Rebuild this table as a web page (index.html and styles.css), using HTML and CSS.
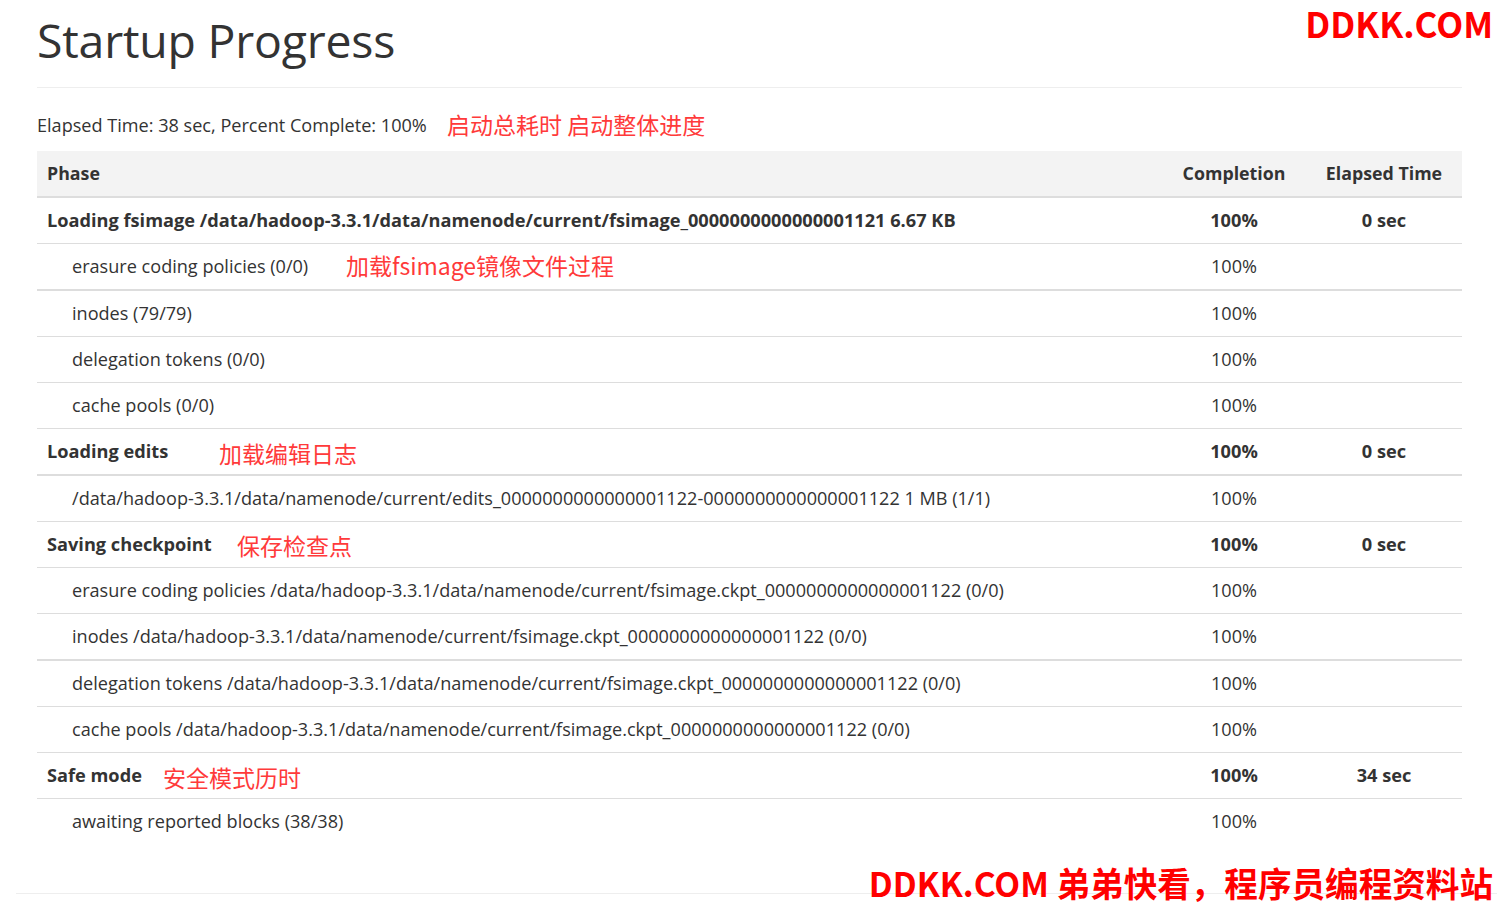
FILE: index.html
```html
<!DOCTYPE html>
<html lang="en">
<head>
    <meta charset="UTF-8">
    <title>Startup Progress</title>
    <link rel="stylesheet" href="styles.css">
</head>
<body>
    <div class="container">
        <div class="page-header">
            <h1>Startup Progress</h1>
        </div>

        <p class="summary">Elapsed Time: 38 sec, Percent Complete: 100%</p>

        <table class="table">
            <thead>
                <tr>
                    <th class="col-phase">Phase</th>
                    <th class="col-completion">Completion</th>
                    <th class="col-elapsed">Elapsed Time</th>
                </tr>
            </thead>
            <tbody>
                <tr class="phase">
                    <td>Loading fsimage /data/hadoop-3.3.1/data/namenode/current/fsimage_0000000000000001121 6.67 KB</td>
                    <td class="num">100%</td>
                    <td class="num">0 sec</td>
                </tr>
                <tr class="step heavy">
                    <td>erasure coding policies (0/0)</td>
                    <td class="num">100%</td>
                    <td></td>
                </tr>
                <tr class="step">
                    <td>inodes (79/79)</td>
                    <td class="num">100%</td>
                    <td></td>
                </tr>
                <tr class="step">
                    <td>delegation tokens (0/0)</td>
                    <td class="num">100%</td>
                    <td></td>
                </tr>
                <tr class="step">
                    <td>cache pools (0/0)</td>
                    <td class="num">100%</td>
                    <td></td>
                </tr>
                <tr class="phase heavy">
                    <td>Loading edits</td>
                    <td class="num">100%</td>
                    <td class="num">0 sec</td>
                </tr>
                <tr class="step">
                    <td>/data/hadoop-3.3.1/data/namenode/current/edits_0000000000000001122-0000000000000001122 1 MB (1/1)</td>
                    <td class="num">100%</td>
                    <td></td>
                </tr>
                <tr class="phase">
                    <td>Saving checkpoint</td>
                    <td class="num">100%</td>
                    <td class="num">0 sec</td>
                </tr>
                <tr class="step">
                    <td>erasure coding policies /data/hadoop-3.3.1/data/namenode/current/fsimage.ckpt_0000000000000001122 (0/0)</td>
                    <td class="num">100%</td>
                    <td></td>
                </tr>
                <tr class="step heavy">
                    <td>inodes /data/hadoop-3.3.1/data/namenode/current/fsimage.ckpt_0000000000000001122 (0/0)</td>
                    <td class="num">100%</td>
                    <td></td>
                </tr>
                <tr class="step">
                    <td>delegation tokens /data/hadoop-3.3.1/data/namenode/current/fsimage.ckpt_0000000000000001122 (0/0)</td>
                    <td class="num">100%</td>
                    <td></td>
                </tr>
                <tr class="step">
                    <td>cache pools /data/hadoop-3.3.1/data/namenode/current/fsimage.ckpt_0000000000000001122 (0/0)</td>
                    <td class="num">100%</td>
                    <td></td>
                </tr>
                <tr class="phase">
                    <td>Safe mode</td>
                    <td class="num">100%</td>
                    <td class="num">34 sec</td>
                </tr>
                <tr class="step">
                    <td>awaiting reported blocks (38/38)</td>
                    <td class="num">100%</td>
                    <td></td>
                </tr>
            </tbody>
        </table>

        <!-- annotations drawn over the screenshot -->
        <span class="note" style="left: 410px; top: 107px;">启动总耗时 启动整体进度</span>
        <span class="note" style="left: 309px; top: 248px;">加载fsimage镜像文件过程</span>
        <span class="note" style="left: 182px; top: 436px;">加载编辑日志</span>
        <span class="note" style="left: 200px; top: 528px;">保存检查点</span>
        <span class="note" style="left: 126px; top: 760px;">安全模式历时</span>
    </div>

    <hr class="footer-line">

    <div class="mark mark-top">DDKK.COM</div>
    <div class="mark mark-bottom">DDKK.COM 弟弟快看，程序员编程资料站</div>
</body>
</html>
```

FILE: styles.css
```css
:root {
    --text: #333333;
    --border: #dddddd;
    --head-bg: #f3f3f3;
    --note: #ff3a3a;
    --mark: #ff0000;
}

* {
    box-sizing: border-box;
}

body {
    margin: 0;
    font-family: "Open Sans", "Noto Sans", "Noto Sans CJK SC", sans-serif;
    font-size: 18.1px;
    color: var(--text);
    background: #ffffff;
    overflow: hidden;
    height: 902px;
    position: relative;
}

.container {
    position: relative;
    width: 1425px;
    margin-left: 37px;
    padding-top: 15px;
}

.page-header {
    padding-bottom: 22px;
    border-bottom: 1px solid #eeeeee;
}

.page-header h1 {
    margin: 0;
    font-size: 46.4px;
    font-weight: 400;
    line-height: 50px;
    letter-spacing: -0.2px;
}

.summary {
    margin: 25px 0 13px;
    line-height: 25px;
}

.table {
    width: 100%;
    border-collapse: collapse;
    table-layout: fixed;
}

.table th,
.table td {
    padding: 10px;
    line-height: 25px;
    text-align: left;
    white-space: nowrap;
}

.table th {
    background-color: var(--head-bg);
    border-bottom: 2px solid var(--border);
    font-weight: 700;
    font-size: 17.8px;
    padding-top: 10px;
    padding-bottom: 10px;
}

.table td {
    border-top: 1px solid var(--border);
}

.table tbody tr:first-child td {
    border-top: none;
}

.col-completion {
    width: 144px;
}

.col-elapsed {
    width: 156px;
}

.table .col-completion,
.table .col-elapsed,
.table .num {
    text-align: center;
}

.phase td {
    font-weight: 700;
    font-size: 18.2px;
}

.step td:first-child {
    padding-left: 35px;
}

.heavy td {
    border-bottom: 2px solid var(--border);
}

.note {
    position: absolute;
    font-family: "Noto Sans CJK SC", "Noto Sans", sans-serif;
    font-size: 23px;
    line-height: 34px;
    color: var(--note);
    white-space: nowrap;
}

.footer-line {
    margin: 0;
    position: absolute;
    left: 16px;
    right: 0;
    top: 893px;
    border: none;
    border-top: 1px solid #eeeeee;
}

.mark {
    position: absolute;
    right: 4px;
    font-family: "Noto Sans CJK SC", "Open Sans", sans-serif;
    font-weight: 700;
    font-size: 34px;
    line-height: 40px;
    color: var(--mark);
    white-space: nowrap;
}

.mark-top {
    top: 3px;
    font-size: 35px;
}

.mark-bottom {
    top: 863px;
    font-size: 33.6px;
}
```
